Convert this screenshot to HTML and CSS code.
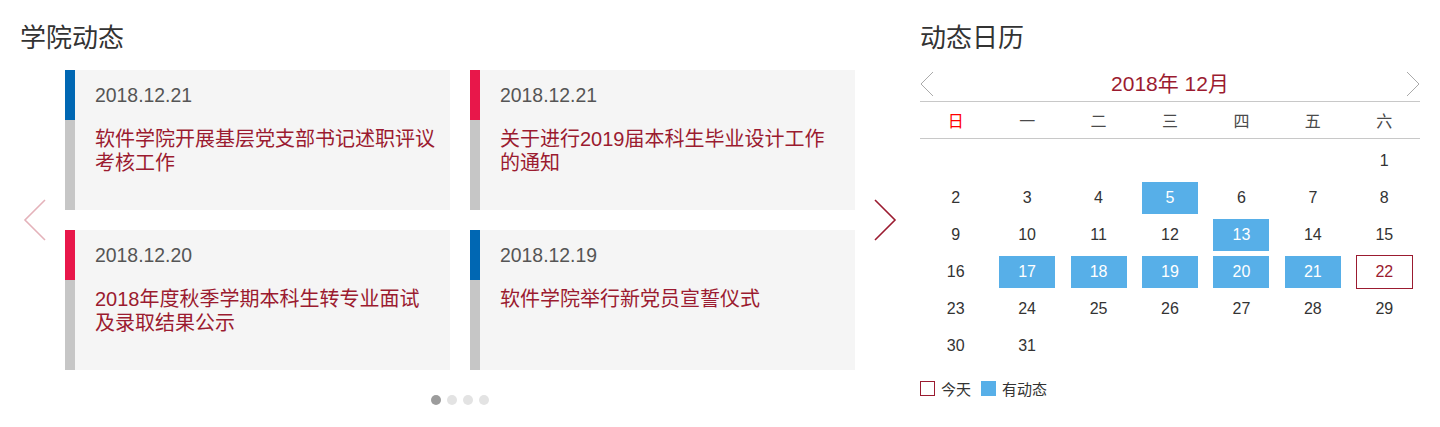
FILE: index.html
```html
<!DOCTYPE html>
<html lang="zh-CN">
<head>
<meta charset="utf-8">
<title>学院动态</title>
<link rel="stylesheet" href="styles.css">
</head>
<body>
<div class="page">
  <section class="news">
    <h2 class="sec-title">学院动态</h2>
    <div class="carousel">
      <button class="nav prev" aria-label="上一页">
        <svg width="45" height="42" viewBox="0 0 45 42"><polyline points="25,1 5,21 25,41" fill="none" stroke="#e4b2ba" stroke-width="1.6"/></svg>
      </button>
      <div class="cards">
        <a class="card" href="#">
          <div class="bar"><div class="bar-top blue"></div></div>
          <div class="body">
            <div class="date">2018.12.21</div>
            <div class="title">软件学院开展基层党支部书记述职评议考核工作</div>
          </div>
        </a>
        <a class="card" href="#">
          <div class="bar"><div class="bar-top red"></div></div>
          <div class="body">
            <div class="date">2018.12.21</div>
            <div class="title">关于进行2019届本科生毕业设计工作的通知</div>
          </div>
        </a>
        <a class="card" href="#">
          <div class="bar"><div class="bar-top red"></div></div>
          <div class="body">
            <div class="date">2018.12.20</div>
            <div class="title">2018年度秋季学期本科生转专业面试及录取结果公示</div>
          </div>
        </a>
        <a class="card" href="#">
          <div class="bar"><div class="bar-top blue"></div></div>
          <div class="body">
            <div class="date">2018.12.19</div>
            <div class="title">软件学院举行新党员宣誓仪式</div>
          </div>
        </a>
      </div>
      <button class="nav next" aria-label="下一页">
        <svg width="45" height="42" viewBox="0 0 45 42"><polyline points="20,1 40,21 20,41" fill="none" stroke="#9b1b30" stroke-width="1.6"/></svg>
      </button>
    </div>
    <div class="dots">
      <span class="dot active"></span><span class="dot"></span><span class="dot"></span><span class="dot"></span>
    </div>
  </section>

  <section class="cal">
    <h2 class="sec-title">动态日历</h2>
    <div class="cal-head">
      <button class="cal-nav" aria-label="上个月">
        <svg width="14" height="26" viewBox="0 0 14 26"><polyline points="13,1 1,13 13,25" fill="none" stroke="#aaaaaa" stroke-width="1"/></svg>
      </button>
      <div class="month">2018年 12月</div>
      <button class="cal-nav" aria-label="下个月">
        <svg width="14" height="26" viewBox="0 0 14 26"><polyline points="1,1 13,13 1,25" fill="none" stroke="#aaaaaa" stroke-width="1"/></svg>
      </button>
    </div>
    <div class="weekdays">
      <span class="sun">日</span><span>一</span><span>二</span><span>三</span><span>四</span><span>五</span><span>六</span>
    </div>
    <div class="days">
      <span class="empty"></span><span class="empty"></span><span class="empty"></span><span class="empty"></span><span class="empty"></span><span class="empty"></span><span>1</span>
      <span>2</span><span>3</span><span>4</span><span class="ev">5</span><span>6</span><span>7</span><span>8</span>
      <span>9</span><span>10</span><span>11</span><span>12</span><span class="ev">13</span><span>14</span><span>15</span>
      <span>16</span><span class="ev">17</span><span class="ev">18</span><span class="ev">19</span><span class="ev">20</span><span class="ev">21</span><span class="today">22</span>
      <span>23</span><span>24</span><span>25</span><span>26</span><span>27</span><span>28</span><span>29</span>
      <span>30</span><span>31</span>
    </div>
    <div class="legend">
      <span class="sq sq-today"></span><span class="lg-text">今天</span>
      <span class="sq sq-ev"></span><span class="lg-text">有动态</span>
    </div>
  </section>
</div>
</body>
</html>
```
FILE: styles.css
```css
* { box-sizing: border-box; }
html, body { margin: 0; padding: 0; background: #fff; }
body {
  font-family: "Liberation Sans", Arial, "Noto Sans CJK SC", sans-serif;
  color: #333;
  width: 1440px;
  height: 427px;
  overflow: hidden;
}
.page {
  display: flex;
  gap: 20px;
  padding-left: 20px;
}
.news { width: 880px; }
.cal { width: 500px; }

.sec-title {
  margin: 0 0 16px 0;
  padding-top: 18px;
  font-size: 26px;
  line-height: 36px;
  font-weight: normal;
  color: #333;
  font-family: "Noto Sans CJK SC", sans-serif;
}

/* carousel */
.carousel {
  display: grid;
  grid-template-columns: 45px 790px 45px;
  align-items: center;
}
.nav {
  border: 0;
  background: none;
  padding: 0;
  margin: 0;
  width: 45px;
  height: 42px;
  display: block;
  cursor: pointer;
}
.nav svg { display: block; }
.cards {
  display: grid;
  grid-template-columns: 385px 385px;
  grid-auto-rows: 140px;
  gap: 20px;
}
.card {
  display: grid;
  grid-template-columns: 10px 1fr;
  background: #f5f5f5;
  text-decoration: none;
}
.bar { background: #c6c6c6; }
.bar-top { height: 50px; }
.bar-top.blue { background: #0067b3; }
.bar-top.red { background: #e8174a; }
.body {
  padding: 0 13px 0 20px;
}
.date {
  height: 50px;
  line-height: 50px;
  font-size: 19.4px;
  color: #555;
}
.title {
  padding-top: 7px;
  font-size: 20px;
  line-height: 24px;
  color: #9b1b30;
}

.dots {
  display: flex;
  justify-content: center;
  gap: 6px;
  margin-top: 25px;
}
.dot {
  width: 10px;
  height: 10px;
  border-radius: 50%;
  background: #e3e3e3;
}
.dot.active { background: #9c9c9c; }

/* calendar */
.cal-head {
  display: flex;
  align-items: center;
  justify-content: space-between;
  height: 32px;
  padding-bottom: 4px;
  border-bottom: 1px solid #c8c8c8;
}
.cal-nav {
  border: 0;
  background: none;
  padding: 0;
  margin: 0;
  width: 14px;
  height: 26px;
  cursor: pointer;
}
.cal-nav svg { display: block; }
.month {
  font-size: 21px;
  line-height: 26px;
  color: #9b1b30;
}
.weekdays {
  display: grid;
  grid-template-columns: repeat(7, 1fr);
  height: 37px;
  border-bottom: 1px solid #c8c8c8;
  align-items: center;
  justify-items: center;
  font-family: "Noto Sans CJK SC", sans-serif;
  font-size: 16px;
  color: #4a4a4a;
}
.weekdays .sun { color: #f00; }
.days {
  display: grid;
  grid-template-columns: repeat(7, 1fr);
  grid-auto-rows: 32px;
  row-gap: 5px;
  padding-top: 6px;
  justify-items: center;
  font-size: 16px;
  color: #333;
}
.days span {
  width: 56px;
  height: 32px;
  line-height: 32px;
  text-align: center;
}
.days .ev {
  background: #57afe8;
  color: #fff;
}
.days .today {
  width: 57px;
  height: 34px;
  margin-top: -1px;
  line-height: 32px;
  border: 1px solid #9b1b30;
  color: #9b1b30;
}

.legend {
  display: flex;
  align-items: center;
  margin-top: 19px;
  height: 15px;
  font-family: "Noto Sans CJK SC", sans-serif;
  font-size: 15px;
  color: #333;
}
.sq {
  width: 15px;
  height: 15px;
  margin-right: 6px;
}
.sq-today { border: 1px solid #9b1b30; }
.sq-ev { background: #57afe8; margin-left: 10px; }
.lg-text { line-height: 15px; }
```
